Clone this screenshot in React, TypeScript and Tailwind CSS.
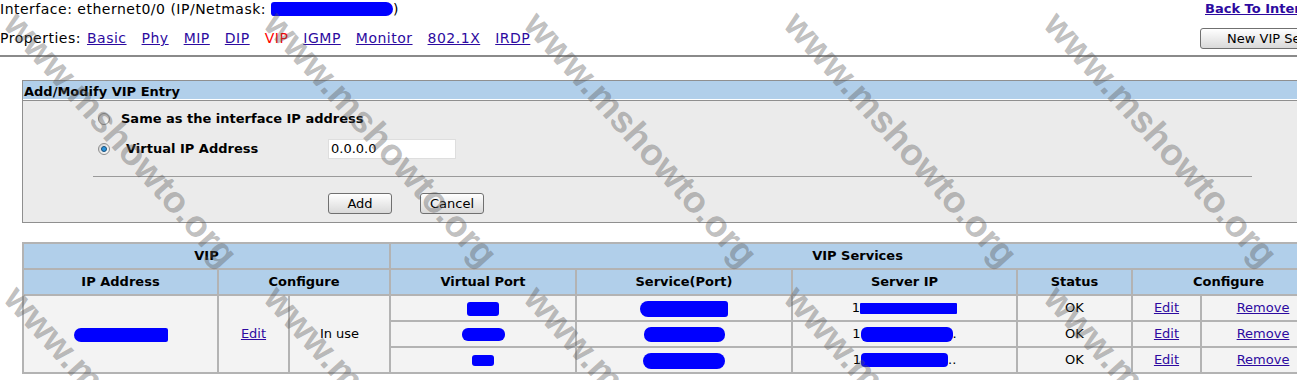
import React from 'react'

const LINK = 'text-[#2d0aa0] underline'

const NAV = ['Basic', 'Phy', 'MIP', 'DIP', 'VIP', 'IGMP', 'Monitor', '802.1X', 'IRDP']

const SERVICES = [
  { port: [32, 14, 'rounded-[3px]'], svc: [88, 16, 'rounded-l-[8px] rounded-r-[3px]'], ip: [97, 11, 'rounded-[1px]'], tail: '' },
  { port: [43, 13, 'rounded-[6px]'], svc: [81, 15, 'rounded-[7px]'], ip: [92, 15, 'rounded-[6px]'], tail: '.' },
  { port: [22, 11, 'rounded-[3px]'], svc: [82, 16, 'rounded-[8px]'], ip: [87, 14, 'rounded-[4px]'], tail: '..' },
]

const WM_X = [25, 285, 545, 805, 1065, 1325]
const WM_Y = [5, 279]

function Blob({ w, h, r }: { w: number; h: number; r: string }) {
  return <span className={`inline-block bg-[#0000ff] align-middle ${r}`} style={{ width: w, height: h }} />
}

function Radio({ checked }: { checked?: boolean }) {
  return (
    <span className="inline-flex h-[12px] w-[12px] shrink-0 items-center justify-center rounded-full border border-[#8e8e8e] bg-linear-to-br from-[#cfcfcf] to-white">
      {checked && <span className="h-[6px] w-[6px] rounded-full border border-[#174f7a] bg-[#2a93dc]" />}
    </span>
  )
}

function Btn({ label, className = '' }: { label: string; className?: string }) {
  return (
    <button className={`h-[21px] rounded-[3px] border border-[#707070] bg-linear-to-b from-white to-[#d9d9d9] text-[13px] text-black ${className}`}>
      {label}
    </button>
  )
}

export default function App() {
  const th = 'border-2 border-[#b3b3b3] bg-[#b1cfea] p-0 text-center font-bold'
  const td = 'border-2 border-[#b3b3b3] bg-[#f3f3f3] p-0 text-center'

  return (
    <div className="relative h-[380px] w-[1297px] overflow-hidden bg-white font-['DejaVu_Sans',Verdana,sans-serif] text-[13px] text-black">
      <div className="w-[1340px]">
        {/* top line */}
        <div className="flex h-[18px] items-center">
          <div className="flex w-[1205px] items-center whitespace-nowrap text-[14px] tracking-[0.5px]">
            Interface: ethernet0/0 (IP/Netmask:&nbsp;
            <Blob w={122} h={14} r="rounded-l-[4px] rounded-r-[9px]" />
            <span>)</span>
          </div>
          <a className={`${LINK} whitespace-nowrap font-bold`}>Back To Interface</a>
        </div>

        {/* properties nav */}
        <div className="mt-[10px] flex h-[21px] items-center">
          <div className="flex w-[1200px] items-center gap-[15px] whitespace-nowrap text-[14px] tracking-[0.5px]">
            <span className="-mr-[9px]">Properties:</span>
            {NAV.map((n) =>
              n === 'VIP' ? (
                <span key={n} className="text-[#ff0000]">{n}</span>
              ) : (
                <a key={n} className={LINK}>{n}</a>
              ),
            )}
          </div>
          <Btn label="New VIP Service" className="w-[140px] pl-[26px] text-left whitespace-nowrap" />
        </div>

        <div className="mt-[6px] h-[2px] border-t-2 border-[#8a8a8a]" />

        {/* add / modify box */}
        <div className="ml-[22px] mt-[23px] w-[1302px] border border-[#8f8f8f]">
          <div className="h-[19px] border-b border-white bg-[#b1cfea] pl-[1px] pt-[4px] font-bold leading-none">
            Add/Modify VIP Entry
          </div>
          <div className="border-t border-[#8f8f8f] bg-[#ebebeb] pb-[8px]">
            <div className="mt-[9px] flex h-[18px] items-center pl-[75px]">
              <Radio />
              <span className="ml-[11px] font-bold">Same as the interface IP address</span>
            </div>
            <div className="mt-[11px] flex h-[20px] items-center pl-[75px]">
              <Radio checked />
              <span className="ml-[16px] w-[202px] font-bold">Virtual IP Address</span>
              <div className="flex h-[20px] w-[128px] items-center border border-[#dedede] bg-white pl-[2px]">0.0.0.0</div>
            </div>
            <div className="ml-[70px] mt-[17px] h-px w-[1159px] bg-[#9a9a9a]" />
            <div className="mt-[16px] flex gap-[28px] pl-[305px]">
              <Btn label="Add" className="w-[64px]" />
              <Btn label="Cancel" className="w-[64px]" />
            </div>
          </div>
        </div>

        {/* VIP table */}
        <table className="ml-[22px] mt-[19px] w-[1302px] table-fixed border-collapse">
          <colgroup>
            <col className="w-[195px]" />
            <col className="w-[71px]" />
            <col className="w-[101px]" />
            <col className="w-[186px]" />
            <col className="w-[216px]" />
            <col className="w-[225px]" />
            <col className="w-[115px]" />
            <col className="w-[69px]" />
            <col className="w-[124px]" />
          </colgroup>
          <thead>
            <tr className="h-[26px]">
              <th colSpan={3} className={th}>VIP</th>
              <th colSpan={6} className={th}>VIP Services</th>
            </tr>
            <tr className="h-[26px]">
              <th className={th}>IP Address</th>
              <th colSpan={2} className={th}>Configure</th>
              <th className={th}>Virtual Port</th>
              <th className={th}>Service(Port)</th>
              <th className={th}>Server IP</th>
              <th className={th}>Status</th>
              <th colSpan={2} className={th}>Configure</th>
            </tr>
          </thead>
          <tbody>
            {SERVICES.map((s, i) => (
              <tr key={i} className="h-[26px]">
                {i === 0 && (
                  <>
                    <td rowSpan={3} className={td}>
                      <Blob w={94} h={14} r="rounded-l-[10px] rounded-r-[3px]" />
                    </td>
                    <td rowSpan={3} className={td}>
                      <a className={LINK}>Edit</a>
                    </td>
                    <td rowSpan={3} className={td}>In use</td>
                  </>
                )}
                <td className={td}>
                  <Blob w={s.port[0] as number} h={s.port[1] as number} r={s.port[2] as string} />
                </td>
                <td className={td}>
                  <Blob w={s.svc[0] as number} h={s.svc[1] as number} r={s.svc[2] as string} />
                </td>
                <td className={td}>
                  <span className="inline-flex items-center">
                    <span>1</span>
                    <Blob w={s.ip[0] as number} h={s.ip[1] as number} r={s.ip[2] as string} />
                    <span>{s.tail}</span>
                  </span>
                </td>
                <td className={td}>OK</td>
                <td className={td}>
                  <a className={LINK}>Edit</a>
                </td>
                <td className={td}>
                  <a className={LINK}>Remove</a>
                </td>
              </tr>
            ))}
          </tbody>
        </table>
      </div>

      {/* watermark */}
      <div className="pointer-events-none absolute inset-0">
        {WM_Y.map((y) =>
          WM_X.map((x) => (
            <span
              key={`${x}-${y}`}
              className="absolute origin-top-left rotate-[48deg] whitespace-nowrap font-['Liberation_Sans',Arial,sans-serif] text-[37px] font-bold leading-none text-[rgba(90,90,90,0.4)]"
              style={{ left: x, top: y }}
            >
              www.mshowto.org
            </span>
          )),
        )}
      </div>
    </div>
  )
}
